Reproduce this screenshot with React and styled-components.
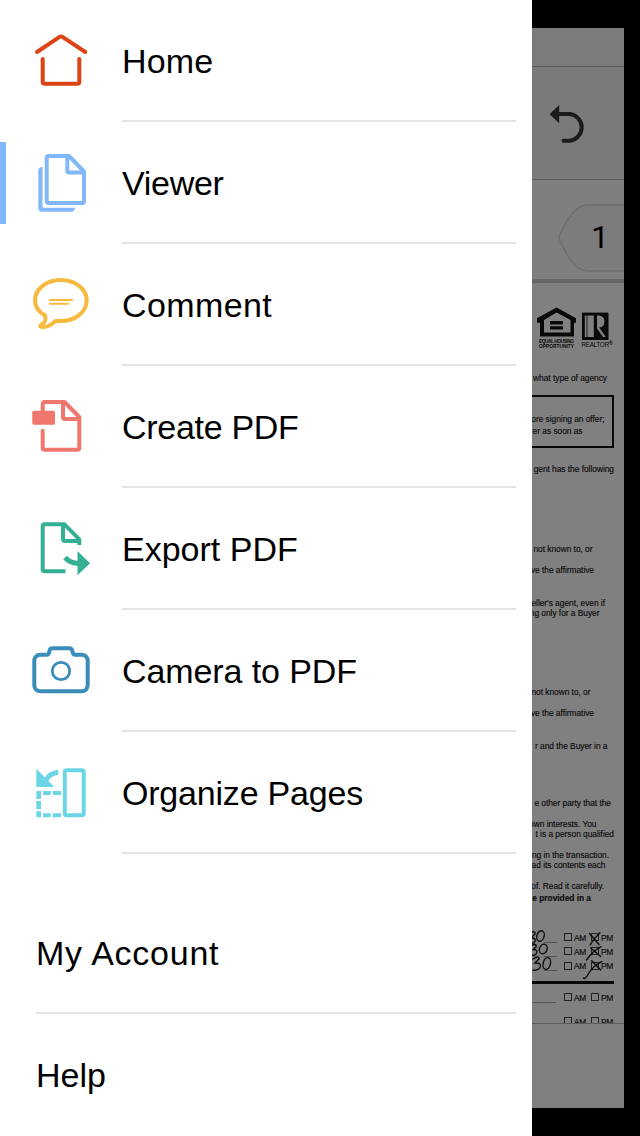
import React, { useState } from "react";
import styled, { createGlobalStyle } from "styled-components";

const HomeIcon = () => (
  <IconSvg viewBox="0 0 60 60" $color="#dc4415">
    <path d="M6 21L28.6 5.9q1.4-.9 2.8 0L54.3 21" />
    <path d="M11.7 28V50.7q0 2 2 2H46.3q2 0 2-2V28" />
  </IconSvg>
);

const ViewerIcon = () => (
  <IconSvg viewBox="0 0 60 60" $color="#82b8f9">
    <path d="M17.7 3H38L53 18.5V48q0 2-2 2H17.7q-2 0-2-2V5q0-2 2-2z" />
    <path d="M36.3 3V17.5q0 2 2 2H53" />
    <path
      className="solid"
      d="M11.5 13.8V53.2q0 1.5 1.5 1.5H44.2q-.7 4-4 4H11.3q-4 0-4-4V17.5q0-3 4.2-3.7z"
    />
  </IconSvg>
);

const CommentIcon = () => (
  <IconSvg viewBox="0 0 60 60" $color="#f7b93e">
    <path d="M14 40.5C8 37 4 32 4 25.5C4 14 15.5 5 29.8 5S55.7 14 55.7 25.5S44 46.2 29.8 46C28 46 26.5 46 25 45.7C21.5 48.5 18 52.5 10 51.8C8.5 51.5 9.5 50 11 49.3C14.5 47.5 15 43.5 14 40.5z" />
    <path d="M19 25H41M19 28.8H37.3" strokeWidth="2" />
  </IconSvg>
);

const CreateIcon = () => (
  <IconSvg viewBox="0 0 60 60" $color="#f0776d">
    <path d="M11.7 15V7q0-2 2-2H33.5L48.3 20V50.7q0 2-2 2H13.7q-2 0-2-2V33.7" />
    <path d="M32 5V20q0 2 2 2H48" />
    <rect className="solid" x="1.300" y="13.7" width="22.700" height="14" rx="1.6" />
  </IconSvg>
);

const ExportIcon = () => (
  <IconSvg viewBox="0 0 60 60" $color="#36b095">
    <path
      d="M48.3 26V20.3L33.5 5.3H13.7q-2 0-2 2V50.3q0 2 2 2H34.5"
      strokeLinecap="butt"
    />
    <path d="M32 5.3V20q0 2 2 2H48" strokeLinecap="butt" />
    <path d="M34 38.5C38 43 42 44.3 47 44.3" strokeWidth="5" strokeLinecap="butt" />
    <path className="solid" d="M46.5 32L59 44.3L46.5 56.3z" />
  </IconSvg>
);

const CameraIcon = () => (
  <IconSvg viewBox="0 0 60 60" $color="#3a8cb9">
    <path d="M9.3 13.7H15.8c1.1 0 1.7-.5 2-1.5l.8-2.7c.4-1.5 1.2-2.2 2.7-2.2H38.5c1.5 0 2.3.7 2.7 2.2l.8 2.7c.3 1 .9 1.5 2 1.5H50.7a6 6 0 0 1 6 6V44.3a6 6 0 0 1-6 6H9.3a6 6 0 0 1-6-6V19.7a6 6 0 0 1 6-6z" />
    <circle cx="30" cy="30" r="8.7" strokeWidth="2.8" />
  </IconSvg>
);

const OrganizeIcon = () => (
  <IconSvg viewBox="0 0 60 60" $color="#6dd6e6">
    <rect x="33.8" y="7.3" width="18.9" height="45" rx="1.8" />
    <path
      className="solid"
      d="M5.3 28H10V36H5.3zM5.3 38H10V46.2H5.3zM5.3 48.3H10V54.3H5.3zM12 28H19.7V32H12zM21.7 28H30V32H21.7zM12 50.3H19.7V54.3H12zM21.7 50.3H30V54.3H21.7z"
    />
    <path d="M27.3 9.3C21.5 9.8 17.5 12.5 14.5 17.5" strokeWidth="5" strokeLinecap="butt" />
    <path className="solid" d="M5.3 7.2q0-1.4 1-.4L22.6 23.2q.8.8-.4.8H6.3q-1 0-1-1z" />
  </IconSvg>
);

const tools = [
  { id: "home", label: "Home", Icon: HomeIcon, color: "#dc4415", spacing: 0.15 },
  { id: "viewer", label: "Viewer", Icon: ViewerIcon, color: "#82b8f9", spacing: -0.3 },
  { id: "comment", label: "Comment", Icon: CommentIcon, color: "#f7b93e", spacing: 0.4 },
  { id: "create", label: "Create PDF", Icon: CreateIcon, color: "#f0776d", spacing: -0.3 },
  { id: "export", label: "Export PDF", Icon: ExportIcon, color: "#36b095", spacing: 0 },
  { id: "camera", label: "Camera to PDF", Icon: CameraIcon, color: "#3a8cb9", spacing: -0.1 },
  { id: "organize", label: "Organize Pages", Icon: OrganizeIcon, color: "#6dd6e6", spacing: -0.2 },
];

// gap = space above the line, right = distance from the page edge
const introLines = [{ text: "what type of agency", gap: 22.5, right: 17 }];

const boxLines = [
  { text: "ore signing an offer;", gap: 17, right: 7.5 },
  { text: "er as soon as", gap: 1.5, right: 29.5 },
];

const bodyLines = [
  { text: "gent has the following", gap: 15.5, right: 10 },
  { text: "not known to, or", gap: 70, right: 31.5 },
  { text: "ve the affirmative", gap: 11.5, right: 30 },
  { text: "eller's agent, even if", gap: 22.5, right: 19 },
  { text: "ng only for a Buyer", gap: 0, right: 24.5 },
  { text: "not known to, or", gap: 69, right: 33.5 },
  { text: "ve the affirmative", gap: 11.5, right: 30 },
  { text: "r and the Buyer in a", gap: 23, right: 16.5 },
  { text: "e other party that the", gap: 46.5, right: 13 },
  { text: "own interests. You", gap: 11, right: 27.5 },
  { text: "t is a person qualified", gap: 0, right: 10 },
  { text: "ing in the transaction.", gap: 11.5, right: 15 },
  { text: "ad its contents each", gap: -0.5, right: 18.5 },
  { text: "eof. Read it carefully.", gap: 11.5, right: 20 },
  { text: "e provided in a", gap: 1.5, right: 33, bold: true },
];

function TextLines({ lines }) {
  return lines.map((line, i) => (
    <DocLine key={i} $gap={line.gap} $right={line.right} $bold={line.bold}>
      {line.text}
    </DocLine>
  ));
}

function TimeRow({ gap, blank }) {
  return (
    <TimeLine $gap={gap}>
      <Blank $wide={blank} />
      <CheckBox />
      <span>AM</span>
      <CheckBox $second />
      <span>PM</span>
    </TimeLine>
  );
}

function Logos() {
  return (
    <LogoSvg viewBox="0 0 92 67">
      <path
        fillRule="evenodd"
        d="M24.500 24.600L44 35.200V39.700H42V53.500H8V39.700H5V35.200zM24.500 29.500L12 37V49.500H38.500V37z"
      />
      <path d="M18 38H31V41.600H18zM18 43.200H31V46.600H18z" />
      <rect x="50" y="29.600" width="26.500" height="27.400" />
      <path d="M52.800 32.500H54.600V54H52.800zM55.400 32.500H61.800V54H55.400z" fill="#808080" />
      <path
        d="M65 32.500H66.500q6 .4 6 6t-5.200 6L73.800 54H71L65 45.500z"
        fill="#808080"
      />
      <text x="7" y="60.300" fontSize="4.800" fontWeight="bold" textLength="35">EQUAL HOUSING</text>
      <text x="7" y="64.500" fontSize="4.800" fontWeight="bold" textLength="35">OPPORTUNITY</text>
      <text x="49.500" y="64" fontSize="6.400" textLength="27.500">REALTOR</text>
      <text x="76.500" y="61.500" fontSize="6" fontWeight="bold">®</text>
    </LogoSvg>
  );
}

export default function App() {
  const [active, setActive] = useState("viewer");

  return (
    <>
      <GlobalStyle />
      <Screen>
        <Drawer>
          {tools.map(({ id, label, Icon, color, spacing }) => (
            <ToolRow key={id} onClick={() => setActive(id)}>
              <Marker $color={active === id ? color : "transparent"} />
              <Icon />
              <ToolLabel $spacing={spacing}>{label}</ToolLabel>
            </ToolRow>
          ))}
          <AccountSection>
            <AccountRow $divider $spacing={0.75}>My Account</AccountRow>
            <AccountRow $spacing={0}>Help</AccountRow>
          </AccountSection>
        </Drawer>

        <ViewerPane>
          <StatusBar />
          <Toolbar>
            <UndoSvg viewBox="0 0 40 42">
              <path d="M9 11H20.500a13.400 13.400 0 0 1 0 26.700H14.500" />
              <path className="head" d="M.5 11.200L10.200 2V20.300z" />
            </UndoSvg>
          </Toolbar>
          <PageBar>
            <PageTab>
              <svg width="66" height="68" viewBox="0 0 66 68">
                <path d="M68 1H29C17 2 10 14 1.500 31q-1 2.500 0 5C10 54 17 66 29 67H68" />
              </svg>
              <PageNumber>1</PageNumber>
            </PageTab>
          </PageBar>

          <Document>
            <Logos />
            <TextLines lines={introLines} />
            <NoticeBox>
              <TextLines lines={boxLines} />
            </NoticeBox>
            <TextLines lines={bodyLines} />
            <TimeTable>
              <TimeRow gap={30} />
              <TimeRow gap={4} />
              <TimeRow gap={4.5} />
              <Rule />
              <TimeRow gap={9} blank />
              <TimeRow gap={14} />
              <Handwriting viewBox="0 0 92 60">
                <path d="M0 3Q3.500 2 3 5L0 8M0 9Q4 9 3 12T0 14" />
                <ellipse cx="8.500" cy="7" rx="3.600" ry="5.400" transform="rotate(18 8.500 7)" />
                <path d="M0 16Q5 14.500 4 18L1 20.500Q6 20.500 4.500 24T0 26" />
                <ellipse cx="11.300" cy="20" rx="3.800" ry="5" transform="rotate(20 11.300 20)" />
                <path d="M1 30Q7 26 7 30L3 34Q9 33.500 8.500 37.500Q6.500 42 1 41" />
                <ellipse cx="14.800" cy="34.500" rx="3.600" ry="6" transform="rotate(14 14.800 34.500)" />
                <path d="M57.500 4.500L67 15.500M68 3.700Q62 9 58 16M58.700 19L68.700 27.500M69 17.700Q61 22 54.500 31M59.700 31.700L68.700 41M69.700 32.700Q61 37 57 44T51.500 49" />
              </Handwriting>
            </TimeTable>
          </Document>
          <BottomBar />
        </ViewerPane>
      </Screen>
    </>
  );
}

const GlobalStyle = createGlobalStyle`
  * {
    box-sizing: border-box;
  }
  body {
    margin: 0;
    background: #000;
    font-family: "Liberation Sans", Arial, sans-serif;
  }
`;

const Screen = styled.div`
  display: flex;
  width: 640px;
  height: 1136px;
  overflow: hidden;
  background: #000;
`;

const Drawer = styled.nav`
  flex: 0 0 532px;
  height: 1136px;
  background: #fff;
  color: #000;
  font-size: 34px;
`;

const ToolRow = styled.div`
  display: flex;
  align-items: center;
  height: 122px;
  padding-right: 16px;
  cursor: pointer;
`;

const Marker = styled.div`
  width: 6px;
  height: 82px;
  margin-right: 25px;
  background: ${(props) => props.$color};
`;

const IconSvg = styled.svg`
  flex: none;
  width: 60px;
  height: 60px;
  margin-right: 31px;
  overflow: visible;
  fill: none;
  stroke: ${(props) => props.$color};
  stroke-width: 4;
  stroke-linecap: round;
  stroke-linejoin: round;

  .solid {
    fill: ${(props) => props.$color};
    stroke: none;
  }
`;

const ToolLabel = styled.div`
  flex: 1;
  height: 122px;
  padding-top: 3px;
  border-bottom: 2px solid #e3e3e3;
  line-height: 117px;
  letter-spacing: ${(props) => props.$spacing}px;
  white-space: nowrap;
`;

const AccountSection = styled.div`
  padding: 38px 16px 0 36px;
`;

const AccountRow = styled.div`
  height: 122px;
  padding-top: 3px;
  border-bottom: ${(props) => (props.$divider ? "2px solid #e3e3e3" : "none")};
  line-height: 117px;
  letter-spacing: ${(props) => props.$spacing}px;
`;

const ViewerPane = styled.section`
  display: flex;
  flex-direction: column;
  width: 92px;
  height: 1080px;
  margin-top: 28px;
  overflow: hidden;
  background: #808080;
`;

const StatusBar = styled.div`
  flex: 0 0 39px;
  background: #7b7b7b;
  border-bottom: 1px solid #5c5c5c;
`;

const Toolbar = styled.div`
  flex: 0 0 113px;
  padding: 36px 0 0 17px;
  background: #7a7a7a;
  border-bottom: 1px solid #5c5c5c;
`;

const UndoSvg = styled.svg`
  display: block;
  width: 40px;
  height: 42px;
  fill: none;
  stroke: #1c1c1c;
  stroke-width: 4;
  stroke-linecap: round;

  .head {
    fill: #1c1c1c;
    stroke: none;
  }
`;

const PageBar = styled.div`
  display: flex;
  flex: 0 0 103px;
  justify-content: flex-end;
  padding-top: 24px;
  background: #7f7f7f;
  border-bottom: 4px solid #666;
`;

const PageTab = styled.div`
  display: grid;
  width: 66px;
  height: 68px;

  > * {
    grid-area: 1 / 1;
  }

  path {
    fill: #7c7c7c;
    stroke: #6e6e6e;
    stroke-width: 1.4;
  }
`;

const PageNumber = styled.span`
  padding-left: 33px;
  font-family: Roboto, sans-serif;
  font-size: 32px;
  line-height: 67px;
`;

const Document = styled.div`
  flex: 0 0 740px;
  overflow: hidden;
  color: #0c0c0c;
  font-size: 8.4px;
  line-height: 10px;
  -webkit-text-stroke: 0.15px #0c0c0c;
`;

const LogoSvg = styled.svg`
  display: block;
  width: 92px;
  height: 67px;
  fill: #080808;
`;

const DocLine = styled.div`
  display: flex;
  justify-content: flex-end;
  height: 10px;
  margin-top: ${(props) => props.$gap}px;
  padding-right: ${(props) => props.$right}px;
  font-weight: ${(props) => (props.$bold ? "bold" : "normal")};
  letter-spacing: -0.03px;
  white-space: nowrap;
`;

const NoticeBox = styled.div`
  display: flow-root;
  width: 82px;
  height: 53px;
  margin-top: 12.5px;
  border: 2px solid #080808;
  border-left: none;
`;

const TimeTable = styled.div`
  position: relative;
`;

const TimeLine = styled.div`
  display: flex;
  align-items: center;
  height: 10px;
  padding-top: ${(props) => props.$gap}px;
  box-sizing: content-box;

  span {
    width: 12px;
    font-size: 8.4px;
    letter-spacing: -0.3px;
  }
`;

const Blank = styled.div`
  align-self: flex-end;
  width: ${(props) => (props.$wide ? 24 : 13)}px;
  height: 1px;
  margin-right: ${(props) => (props.$wide ? 8 : 7)}px;
  margin-left: ${(props) => (props.$wide ? 0 : 12)}px;
  background: #555;
`;

const CheckBox = styled.i`
  width: 8px;
  height: 8px;
  margin-right: 2px;
  margin-bottom: 1px;
  margin-left: ${(props) => (props.$second ? 5 : 0)}px;
  border: 1px solid #222;
`;

const Rule = styled.div`
  width: 82px;
  height: 3px;
  margin-top: 9.5px;
  background: #080808;
`;

// pen marks written over the printed form
const Handwriting = styled.svg`
  position: absolute;
  top: 26px;
  left: 0;
  width: 92px;
  height: 60px;
  fill: none;
  stroke: #0c0c0c;
  stroke-width: 1.4;
  stroke-linecap: round;
`;

const BottomBar = styled.div`
  flex: 1;
  border-top: 1px solid #5c5c5c;
`;
